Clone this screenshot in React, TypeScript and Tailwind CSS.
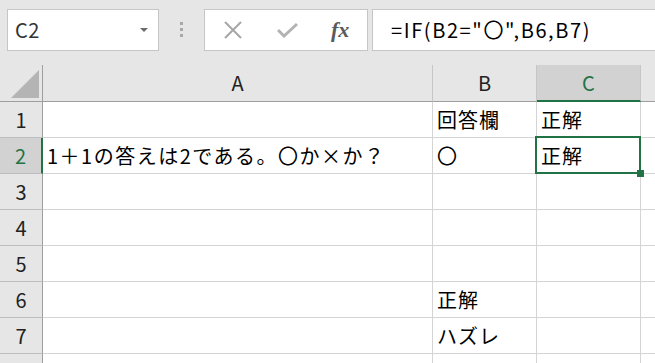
import React from "react";

const JP = '"Noto Sans CJK JP", "Liberation Sans", sans-serif';

const rows: { n: number; a: string; b: string; c: string }[] = [
  { n: 1, a: "", b: "回答欄", c: "正解" },
  { n: 2, a: "1＋1の答えは2である。〇か×か？", b: "〇", c: "正解" },
  { n: 3, a: "", b: "", c: "" },
  { n: 4, a: "", b: "", c: "" },
  { n: 5, a: "", b: "", c: "" },
  { n: 6, a: "", b: "正解", c: "" },
  { n: 7, a: "", b: "ハズレ", c: "" },
  { n: 8, a: "", b: "", c: "" },
];

export default function App() {
  return (
    <div
      className="w-[655px] h-[363px] overflow-hidden bg-[#e6e6e6] text-black"
      style={{ fontFamily: JP }}
    >
      {/* toolbar */}
      <div className="flex h-[65px] items-start">
        <div className="ml-[7px] mt-[9px] w-[152px] h-[42px] border border-[#c6c6c6] bg-white flex items-center pl-[7px] pr-[10px]">
          <span className="text-[20px] text-[#333] flex-1 leading-none tracking-[0.5px]">C2</span>
          <svg width="8" height="5" viewBox="0 0 8 5">
            <path d="M0 0 L8 0 L4 4 Z" fill="#6b6b6b" />
          </svg>
        </div>
        <div className="w-[45px] mt-[22px] flex flex-col items-center gap-[3px]">
          <div className="w-[3px] h-[3px] bg-[#a8a8a8]" />
          <div className="w-[3px] h-[3px] bg-[#a8a8a8]" />
          <div className="w-[3px] h-[3px] bg-[#a8a8a8]" />
        </div>
        <div className="mt-[9px] w-[164px] h-[42px] border border-[#c6c6c6] bg-white flex items-center">
          <svg className="ml-[18px]" width="20" height="18" viewBox="0 0 20 18">
            <path d="M2 1 L18 17 M18 1 L2 17" stroke="#a6a6a6" strokeWidth="2" fill="none" />
          </svg>
          <svg className="ml-[34px]" width="22" height="16" viewBox="0 0 22 16">
            <path d="M1 8 L7 14 L20 2" stroke="#b3b3b3" strokeWidth="3" fill="none" />
          </svg>
          <span
            className="ml-[32px] text-[22px] italic font-bold text-[#5a5a5a] leading-none"
            style={{ fontFamily: '"Liberation Serif", serif' }}
          >
            fx
          </span>
        </div>
        <div className="ml-[4px] mt-[9px] flex-1 h-[42px] border border-r-0 border-[#c6c6c6] bg-white flex items-center pl-[18px]">
          <span className="text-[20px] leading-none tracking-[1.6px]">=IF(B2="〇",B6,B7)</span>
        </div>
      </div>

      {/* column header */}
      <div className="flex h-[37px]">
        <div className="w-[43px] border-r border-b border-[#9e9e9e] flex items-end justify-end pr-[3px] pb-[3px]">
          <svg width="28" height="28" viewBox="0 0 28 28">
            <path d="M28 0 L28 28 L0 28 Z" fill="#b4b4b4" />
          </svg>
        </div>
        <div className="w-[390px] border-r border-r-[#c6c6c6] border-b border-b-[#9e9e9e] flex items-center justify-center text-[20px] text-[#222]">
          A
        </div>
        <div className="w-[104px] border-r border-r-[#c6c6c6] border-b border-b-[#9e9e9e] flex items-center justify-center text-[20px] text-[#222]">
          B
        </div>
        <div className="w-[104px] bg-[#d2d2d2] border-r border-r-[#c6c6c6] border-b-2 border-b-[#217346] flex items-center justify-center text-[20px] text-[#217346]">
          C
        </div>
        <div className="flex-1 border-b border-b-[#9e9e9e]" />
      </div>

      {/* rows */}
      {rows.map((r) => {
        const sel = r.n === 2;
        return (
          <div key={r.n} className="flex h-[36px]">
            <div
              className={
                sel
                  ? "w-[43px] bg-[#d2d2d2] border-r-2 border-r-[#217346] border-b border-b-[#bdbdbd] flex items-center justify-center text-[20px] text-[#217346]"
                  : "w-[43px] border-r border-r-[#9e9e9e] border-b border-b-[#bdbdbd] flex items-center justify-center text-[20px] text-[#222]"
              }
            >
              {r.n < 8 ? r.n : ""}
            </div>
            <div className="w-[390px] bg-white border-r border-b border-[#d4d4d4] flex items-center pl-[4px] text-[20px] tracking-[1.5px] whitespace-nowrap">
              {r.a}
            </div>
            <div className="w-[104px] bg-white border-r border-b border-[#d4d4d4] flex items-center pl-[4px] text-[20px] tracking-[1px] whitespace-nowrap">
              {r.b}
            </div>
            <div className="relative w-[104px] bg-white border-r border-b border-[#d4d4d4] flex items-center pl-[4px] text-[20px] tracking-[1px] whitespace-nowrap">
              {r.c}
              {sel && (
                <>
                  <div className="absolute z-10 -left-[2px] -top-[2px] -right-[1px] -bottom-[1px] border-2 border-[#217346]" />
                  <div className="absolute z-20 -right-[4px] -bottom-[4px] w-[7px] h-[7px] bg-[#217346]" />
                </>
              )}
            </div>
            <div className="flex-1 bg-white border-b border-[#d4d4d4]" />
          </div>
        );
      })}
    </div>
  );
}
